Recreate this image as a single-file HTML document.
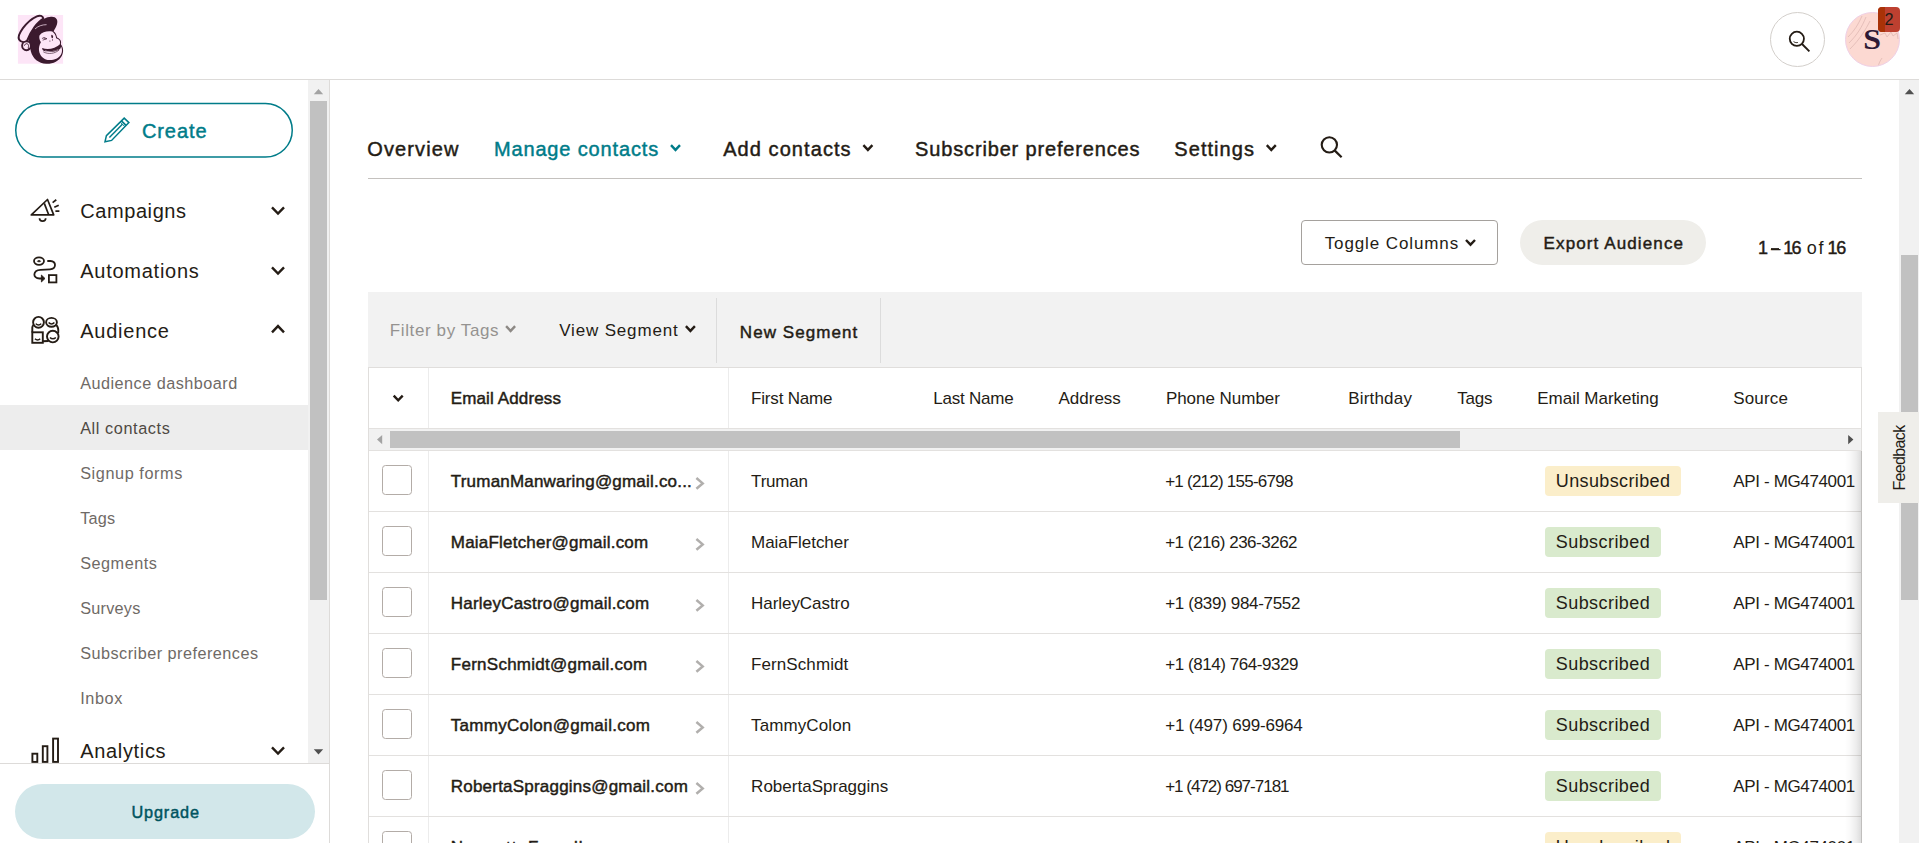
<!DOCTYPE html>
<html><head><meta charset="utf-8"><title>Audience | Mailchimp</title>
<style>
html,body{margin:0;padding:0;width:1919px;height:843px;overflow:hidden;background:#fff;font-family:"Liberation Sans",sans-serif;}
.a{position:absolute;}
.t{position:absolute;white-space:nowrap;line-height:1;font-family:"Liberation Sans",sans-serif;}
svg{position:absolute;overflow:visible;}
.cb{position:absolute;left:382px;width:28px;height:28px;border:1px solid #b3aca7;border-radius:3.5px;background:#fff;}
.bs{position:absolute;left:1545px;width:116px;height:30px;border-radius:4px;background:#d9eacd;}
.bu{position:absolute;left:1545px;width:136px;height:30px;border-radius:4px;background:#fbeeca;}
.rl{position:absolute;left:369px;width:1493px;height:1px;background:#e3e1df;}
</style></head><body>
<!-- header -->
<div class="a" style="left:0;top:79px;width:1919px;height:1px;background:#dddbd9"></div>
<!--LOGO_S--><svg style="left:14px;top:10px" width="56" height="60" viewBox="0 0 787 843">
<rect x="55" y="70" width="635" height="685" fill="#fde5f7"/>
<!-- head + crown -->
<path fill="#3b1a2e" d="M200,330 C270,215 330,160 420,128 C455,106 490,98 520,96 C588,90 626,135 603,205 C593,240 573,268 557,298 C586,322 599,352 605,385 C651,402 673,440 657,482 C693,522 703,585 673,642 C633,718 546,760 453,756 C346,750 263,684 237,584 C227,540 222,470 200,420 Z"/>
<!-- brim -->
<path transform="translate(5,10)" d="M66,404 C34,345 160,148 316,78 C360,60 400,74 408,110 C330,152 230,282 176,428 C134,448 86,440 66,404 Z" fill="#fde5f7" stroke="#3b1a2e" stroke-width="27" stroke-linejoin="round"/>
<!-- crown highlight -->
<path d="M300,262 C340,225 395,206 452,206" fill="none" stroke="#fde5f7" stroke-width="10" stroke-linecap="round"/>
<!-- face -->
<path d="M358,358 C394,306 470,290 538,302 C572,326 588,358 592,396 C638,408 658,440 642,484 C678,524 686,580 658,630 C624,688 548,712 472,702 C406,690 362,638 352,574 C346,530 356,490 378,452 C358,420 350,388 358,358 Z" fill="#fde5f7"/>
<!-- ear -->
<circle cx="176" cy="503" r="62" fill="#fde5f7" stroke="#3b1a2e" stroke-width="27"/>
<path d="M148,496 C158,464 200,464 204,500 C206,518 196,526 202,544" fill="none" stroke="#3b1a2e" stroke-width="13" stroke-linecap="round"/>
<!-- mouth -->
<path d="M396,534 C470,566 580,546 656,474 C668,498 664,524 650,544 C590,594 480,602 418,574 C402,564 394,550 396,534 Z" fill="#3b1a2e"/>
<path d="M436,568 C500,588 580,574 632,544 C596,576 500,592 444,578 Z" fill="#fde5f7"/>
<path d="M416,590 C480,626 572,616 630,566" fill="none" stroke="#3b1a2e" stroke-width="9" stroke-linecap="round"/>
<!-- eyes -->
<ellipse cx="536" cy="372" rx="12" ry="24" transform="rotate(-12 536 372)" fill="#3b1a2e"/>
<path d="M398,398 C420,388 440,390 458,402 M408,422 C428,416 446,410 458,402 M420,384 L446,412" fill="none" stroke="#3b1a2e" stroke-width="10" stroke-linecap="round"/>
<circle cx="505" cy="436" r="7.5" fill="#3b1a2e"/><circle cx="541" cy="420" r="7.5" fill="#3b1a2e"/>
</svg>
<!--LOGO_E-->
<div class="a" style="left:1770px;top:12px;width:53px;height:53px;border:1px solid #d3cfcb;border-radius:50%"></div>
<svg style="left:0;top:0" width="1919" height="80" viewBox="0 0 1919 80" fill="none" stroke="#241c15"><circle cx="1796.85" cy="38.8" r="7.1" stroke-width="1.8"/><path d="M1802 44 L1809.4 51.4" stroke-width="1.9"/><path d="M1793.6 41.6 C1795 42.6 1796.4 42.8 1797.8 42.5" stroke-width="1"/></svg>
<div class="a" style="left:1845px;top:12px;width:53px;height:53px;border:1px solid #efd0e6;border-radius:50%;background:#fcd9d2;overflow:hidden">
<svg style="left:0;top:0" width="54" height="54" viewBox="0 0 54 54" fill="none" stroke="#e0b9b4" stroke-width="0.8"><path d="M2 24 C8 18 12 12 16 3"/><path d="M3 30 C11 22 16 14 20 4"/><path d="M4 36 C14 26 20 16 24 8"/><path d="M32 54 C33 50 34 48 36 45"/><path d="M34 22 L39 20 L41 24 L45 19 L47 23 L51 20 L52 26"/></svg>
</div>
<div class="a" style="left:1863.6px;top:25px;font:bold 29px/1 'Liberation Serif',serif;color:#2e1a35;transform:scaleX(1.1)">S</div>
<div class="a" style="left:1878px;top:7px;width:22px;height:25px;border-radius:4px;background:#bd4030;overflow:hidden"><div class="a" style="left:0;top:0;width:6.5px;height:25px;background:#a93207"></div></div>
<div class="a" style="left:1884.6px;top:11px;font:16.25px/1 'Liberation Sans',sans-serif;color:#241c15">2</div>

<!-- sidebar -->
<div class="a" style="left:329px;top:80px;width:1px;height:763px;background:#dddbd9"></div>
<div class="a" style="left:308px;top:80px;width:21px;height:683px;background:#f1f1f1"></div>
<div class="a" style="left:310px;top:101px;width:17px;height:498.5px;background:#c1c1c1"></div>
<svg style="left:308px;top:80px" width="21" height="683" viewBox="0 0 21 683"><path d="M5.8 14.2 L15.2 14.2 L10.5 9 Z" fill="#a3a3a3"/><path d="M5.8 669.3 L15.2 669.3 L10.5 674.5 Z" fill="#505050"/></svg>
<div class="a" style="left:0;top:405px;width:308px;height:45px;background:#ededed"></div>
<svg style="left:0;top:0" width="330" height="200" viewBox="0 0 330 200"><rect x="15.75" y="103.55" width="276.5" height="53.5" rx="26.75" fill="#fff" stroke="#007c89" stroke-width="1.5"/></svg>
<!--SIDEICONS_S--><svg style="left:0;top:0" width="330" height="770" viewBox="0 0 330 770" fill="none" stroke="#241c15">
<!-- pencil -->
<g stroke="#007c89" stroke-width="1.5" stroke-linejoin="miter">
<path d="M124.2 118.1 L128.9 122.6 L111.6 140.4 L105 141.8 L106.4 135.6 Z"/>
<path d="M121.4 120.9 L126.1 125.4"/><path d="M120.2 122.1 L124.9 126.6" stroke-width="1"/>
<path d="M109.4 137.4 L122.4 124.2" stroke-width="1.4"/>
</g>
<!-- chevrons -->
<g stroke-width="2.4">
<path d="M272 207.3 L278 213.5 L284 207.3"/>
<path d="M272 267.3 L278 273.5 L284 267.3"/>
<path d="M272 332.3 L278 326.1 L284 332.3"/>
<path d="M272 747.3 L278 753.5 L284 747.3"/>
</g>
<!-- megaphone -->
<g stroke-width="1.7" stroke-linejoin="round">
<path d="M31.3 214.9 L47.5 199.5 L53.7 214.9 Z"/>
<path d="M44.3 203.4 L48.7 214.7"/>
<path d="M52.6 202.6 L56.3 199.8 M54.3 207.3 L58.7 205.3 M55.4 211.1 L59.4 211.1"/>
<path d="M39.5 218.3 C39.5 222 45.7 222 45.7 218.3"/>
</g>
<!-- automations -->
<g stroke-width="1.8">
<ellipse cx="39" cy="261.1" rx="5" ry="3.7"/>
<ellipse cx="39" cy="261.2" rx="1.6" ry="0.6" fill="#241c15" stroke-width="0.8"/>
<path d="M47.3 261 L50.5 261 C56.6 261 56.6 269 50 269.3 L40.5 269.8 C32.6 270.2 32.4 278.5 39.5 278.5 L42.5 278.5"/>
<path d="M41.4 275 L45 278.5 L41.4 282 Z" fill="#241c15" stroke-width="0.8"/>
<rect x="48.9" y="275.1" width="7.5" height="7.3"/>
</g>
<!-- audience -->
<g stroke-width="1.9">
<circle cx="38.5" cy="322.3" r="5.4"/>
<ellipse cx="51.5" cy="322.3" rx="5.4" ry="4.4"/>
<circle cx="52.8" cy="336.6" r="5.8"/>
<rect x="32.3" y="332.3" width="10.5" height="10.5"/>
<path d="M32.3 332.4 L32.3 327.5 C32.3 326.5 32.8 325.6 33.6 325"/>
<path d="M56.3 325 C58.2 327 58.6 330 58.2 333.2"/>
<path d="M42.7 341.3 L48.6 341"/>
<g stroke-width="1.5"><path d="M35.8 323.6 C37.2 325.4 39.8 325.4 41.2 323.6"/><path d="M48.6 322.6 C50.2 324.4 52.8 324.4 54.4 322.6"/><path d="M50 337.4 C51.6 339.2 54.2 339.2 55.8 337.4"/><path d="M35 338.8 C36.4 340.4 38.8 340.4 40.2 338.8"/></g>
</g>
<!-- analytics -->
<g stroke-width="1.9">
<rect x="32.4" y="753.7" width="4.9" height="8.2"/>
<rect x="42.8" y="746.2" width="4.6" height="15.7"/>
<rect x="53.1" y="738.6" width="4.9" height="23.3"/>
</g>
</svg>
<!--SIDEICONS_E-->
<div class="a" style="left:0;top:763px;width:329px;height:80px;background:#fff"></div>
<div class="a" style="left:0;top:763px;width:329px;height:1px;background:#dddbd9"></div>
<div class="a" style="left:15px;top:784px;width:300px;height:55px;border-radius:27.5px;background:#d2e7ea"></div>

<!-- main -->
<div class="a" style="left:368px;top:178px;width:1494px;height:1px;background:#c4c1be"></div>
<div class="a" style="left:1301px;top:220px;width:195px;height:43px;border:1px solid #a5a19d;border-radius:4px"></div>
<div class="a" style="left:1520px;top:220px;width:186px;height:45px;border-radius:22.5px;background:#efeeea"></div>
<div class="a" style="left:1770.8px;top:248.2px;width:7.8px;height:1.7px;background:#3a332d"></div>
<div class="a" style="left:368px;top:292px;width:1494px;height:76px;background:#f2f2f2"></div>
<div class="a" style="left:716px;top:298px;width:1px;height:65px;background:#dcdcdc"></div>
<div class="a" style="left:880px;top:298px;width:1px;height:65px;background:#dcdcdc"></div>
<!-- table -->
<div class="a" style="left:368px;top:367px;width:1492px;height:500px;border:1px solid #e0dedc;background:#fff"></div>
<div class="a" style="left:428px;top:368px;width:1px;height:475px;background:#ececec"></div>
<div class="a" style="left:728px;top:368px;width:1px;height:475px;background:#ececec"></div>
<div class="a" style="left:369px;top:428px;width:1492px;height:23px;background:#f1f1f1"></div>
<div class="rl" style="top:428px"></div><div class="rl" style="top:450px"></div>
<div class="a" style="left:390px;top:431px;width:1070px;height:17px;background:#c1c1c1"></div>
<svg style="left:369px;top:429px" width="1492" height="21" viewBox="0 0 1492 21"><path d="M13.2 6 L13.2 15.2 L8 10.6 Z" fill="#a3a3a3"/><path d="M1479.2 6 L1479.2 15.2 L1484.4 10.6 Z" fill="#505050"/></svg>
<div class="rl" style="top:511px"></div>
<div class="cb" style="top:465px"></div>
<div class="bu" style="top:466px"></div>
<svg style="left:694px;top:477px" width="12" height="14" viewBox="0 0 12 14"><path d="M2.4 1 L8.7 6.4 L2.4 11.8" fill="none" stroke="#b1afad" stroke-width="2.5"/></svg>
<div class="rl" style="top:572px"></div>
<div class="cb" style="top:526px"></div>
<div class="bs" style="top:527px"></div>
<svg style="left:694px;top:538px" width="12" height="14" viewBox="0 0 12 14"><path d="M2.4 1 L8.7 6.4 L2.4 11.8" fill="none" stroke="#b1afad" stroke-width="2.5"/></svg>
<div class="rl" style="top:633px"></div>
<div class="cb" style="top:587px"></div>
<div class="bs" style="top:588px"></div>
<svg style="left:694px;top:599px" width="12" height="14" viewBox="0 0 12 14"><path d="M2.4 1 L8.7 6.4 L2.4 11.8" fill="none" stroke="#b1afad" stroke-width="2.5"/></svg>
<div class="rl" style="top:694px"></div>
<div class="cb" style="top:648px"></div>
<div class="bs" style="top:649px"></div>
<svg style="left:694px;top:660px" width="12" height="14" viewBox="0 0 12 14"><path d="M2.4 1 L8.7 6.4 L2.4 11.8" fill="none" stroke="#b1afad" stroke-width="2.5"/></svg>
<div class="rl" style="top:755px"></div>
<div class="cb" style="top:709px"></div>
<div class="bs" style="top:710px"></div>
<svg style="left:694px;top:721px" width="12" height="14" viewBox="0 0 12 14"><path d="M2.4 1 L8.7 6.4 L2.4 11.8" fill="none" stroke="#b1afad" stroke-width="2.5"/></svg>
<div class="rl" style="top:816px"></div>
<div class="cb" style="top:770px"></div>
<div class="bs" style="top:771px"></div>
<svg style="left:694px;top:782px" width="12" height="14" viewBox="0 0 12 14"><path d="M2.4 1 L8.7 6.4 L2.4 11.8" fill="none" stroke="#b1afad" stroke-width="2.5"/></svg>
<div class="rl" style="top:877px"></div>
<div class="cb" style="top:831px"></div>
<div class="bu" style="top:832px"></div>
<svg style="left:694px;top:843px" width="12" height="14" viewBox="0 0 12 14"><path d="M2.4 1 L8.7 6.4 L2.4 11.8" fill="none" stroke="#b1afad" stroke-width="2.5"/></svg>
<!-- right fade -->
<div class="a" style="left:1845px;top:451px;width:17px;height:392px;background:linear-gradient(to right,rgba(0,0,0,0),rgba(0,0,0,0.02) 25%,rgba(0,0,0,0.07) 65%,rgba(0,0,0,0.15))"></div>
<!-- page scrollbar -->
<div class="a" style="left:1899px;top:80px;width:21px;height:763px;background:#f1f1f1"></div>
<div class="a" style="left:1901px;top:255px;width:17px;height:345px;background:#c1c1c1"></div>
<svg style="left:1899px;top:80px" width="21" height="30" viewBox="0 0 21 30"><path d="M5.8 14.2 L15.2 14.2 L10.5 9 Z" fill="#505050"/></svg>
<!-- feedback -->
<div class="a" style="left:1878px;top:412px;width:41px;height:91px;background:#efeeea"></div>
<div class="t" style="left:1900px;top:457.5px;font-size:16px;letter-spacing:-0.65px;color:#241c15;transform:translate(-50%,-50%) rotate(-90deg)">Feedback</div>
<!--ICONS_S--><svg style="left:0;top:0" width="1919" height="843" viewBox="0 0 1919 843" fill="none" stroke="#241c15" stroke-width="2.4">
<!-- tab chevrons -->
<path d="M671 145.2 L675.5 149.9 L680 145.2" stroke="#007c89"/>
<path d="M863.4 145.2 L867.9 149.9 L872.4 145.2"/>
<path d="M1266.8 145.2 L1271.3 149.9 L1275.8 145.2"/>
<!-- tab search -->
<circle cx="1329.35" cy="144.85" r="7.65" stroke-width="2.1"/><path d="M1334.6 150.4 L1341.6 157.2" stroke-width="2.3"/>
<!-- toggle columns chevron -->
<path d="M1466 240 L1470.5 244.7 L1475 240"/>
<!-- filter chevrons -->
<path d="M506.1 326.2 L510.6 330.9 L515.1 326.2" stroke="#8d8985"/>
<path d="M685.9 326.2 L690.4 330.9 L694.9 326.2"/>
<!-- header chevron -->
<path d="M393.7 395.6 L398.2 400.3 L402.7 395.6"/>
</svg>
<!--ICONS_E-->
<span class="t" style="left:141.9px;top:121px;font-size:20px;color:#007c89;-webkit-text-stroke:0.45px currentColor;letter-spacing:0.93px;">Create</span>
<span class="t" style="left:80.2px;top:201px;font-size:20px;color:#241c15;letter-spacing:0.59px;">Campaigns</span>
<span class="t" style="left:80.2px;top:261px;font-size:20px;color:#241c15;letter-spacing:0.75px;">Automations</span>
<span class="t" style="left:80.2px;top:321px;font-size:20px;color:#241c15;letter-spacing:0.76px;">Audience</span>
<span class="t" style="left:80.2px;top:375px;font-size:16.25px;color:#6f6a66;letter-spacing:0.47px;">Audience dashboard</span>
<span class="t" style="left:80.2px;top:420px;font-size:16.25px;color:#4f4943;letter-spacing:0.59px;">All contacts</span>
<span class="t" style="left:80.2px;top:465px;font-size:16.25px;color:#6f6a66;letter-spacing:0.58px;">Signup forms</span>
<span class="t" style="left:80.2px;top:510px;font-size:16.25px;color:#6f6a66;letter-spacing:0.19px;">Tags</span>
<span class="t" style="left:80.2px;top:555px;font-size:16.25px;color:#6f6a66;letter-spacing:0.50px;">Segments</span>
<span class="t" style="left:80.2px;top:600px;font-size:16.25px;color:#6f6a66;letter-spacing:0.23px;">Surveys</span>
<span class="t" style="left:80.2px;top:645px;font-size:16.25px;color:#6f6a66;letter-spacing:0.47px;">Subscriber preferences</span>
<span class="t" style="left:80.2px;top:690px;font-size:16.25px;color:#6f6a66;letter-spacing:0.58px;">Inbox</span>
<span class="t" style="left:80.2px;top:741px;font-size:20px;color:#241c15;letter-spacing:0.67px;">Analytics</span>
<span class="t" style="left:131.4px;top:804px;font-size:16.25px;color:#00545f;-webkit-text-stroke:0.45px currentColor;letter-spacing:0.88px;">Upgrade</span>
<span class="t" style="left:367.3px;top:139px;font-size:20px;color:#241c15;-webkit-text-stroke:0.45px currentColor;letter-spacing:1.12px;">Overview</span>
<span class="t" style="left:493.9px;top:139px;font-size:20px;color:#007c89;-webkit-text-stroke:0.45px currentColor;letter-spacing:0.86px;">Manage contacts</span>
<span class="t" style="left:723.2px;top:139px;font-size:20px;color:#241c15;-webkit-text-stroke:0.45px currentColor;letter-spacing:1.07px;">Add contacts</span>
<span class="t" style="left:915.1px;top:139px;font-size:20px;color:#241c15;-webkit-text-stroke:0.45px currentColor;letter-spacing:0.84px;">Subscriber preferences</span>
<span class="t" style="left:1174.3px;top:139px;font-size:20px;color:#241c15;-webkit-text-stroke:0.45px currentColor;letter-spacing:1.06px;">Settings</span>
<span class="t" style="left:1324.7px;top:235px;font-size:17px;color:#241c15;letter-spacing:0.89px;">Toggle Columns</span>
<span class="t" style="left:1543.6px;top:235px;font-size:17px;color:#241c15;-webkit-text-stroke:0.45px currentColor;letter-spacing:1.11px;">Export Audience</span>
<span class="t" style="left:1758.0px;top:239px;font-size:18px;color:#241c15;-webkit-text-stroke:0.45px currentColor;letter-spacing:-3.12px;">1</span>
<span class="t" style="left:1770.9px;top:240px;font-size:17px;color:#241c15;letter-spacing:-0.97px;">–</span>
<span class="t" style="left:1783.2px;top:239px;font-size:18px;color:#241c15;-webkit-text-stroke:0.45px currentColor;letter-spacing:-1.63px;">16</span>
<span class="t" style="left:1806.7px;top:239px;font-size:18px;color:#241c15;letter-spacing:1.88px;">of</span>
<span class="t" style="left:1827.6px;top:239px;font-size:18px;color:#241c15;-webkit-text-stroke:0.45px currentColor;letter-spacing:-1.33px;">16</span>
<span class="t" style="left:389.8px;top:322px;font-size:17px;color:#959290;letter-spacing:0.61px;">Filter by Tags</span>
<span class="t" style="left:559.2px;top:322px;font-size:17px;color:#241c15;letter-spacing:0.84px;">View Segment</span>
<span class="t" style="left:739.8px;top:324px;font-size:17px;color:#241c15;-webkit-text-stroke:0.45px currentColor;letter-spacing:1.06px;">New Segment</span>
<span class="t" style="left:450.8px;top:390px;font-size:17px;color:#241c15;-webkit-text-stroke:0.45px currentColor;letter-spacing:0.12px;">Email Address</span>
<span class="t" style="left:751.1px;top:390px;font-size:17px;color:#241c15;letter-spacing:-0.19px;">First Name</span>
<span class="t" style="left:933.2px;top:390px;font-size:17px;color:#241c15;letter-spacing:-0.21px;">Last Name</span>
<span class="t" style="left:1058.4px;top:390px;font-size:17px;color:#241c15;letter-spacing:0.02px;">Address</span>
<span class="t" style="left:1165.9px;top:390px;font-size:17px;color:#241c15;letter-spacing:-0.03px;">Phone Number</span>
<span class="t" style="left:1348.2px;top:390px;font-size:17px;color:#241c15;letter-spacing:0.19px;">Birthday</span>
<span class="t" style="left:1457.2px;top:390px;font-size:17px;color:#241c15;letter-spacing:-0.24px;">Tags</span>
<span class="t" style="left:1537.3px;top:390px;font-size:17px;color:#241c15;letter-spacing:-0.03px;">Email Marketing</span>
<span class="t" style="left:1733.3px;top:390px;font-size:17px;color:#241c15;letter-spacing:0.14px;">Source</span>
<span class="t" style="left:450.8px;top:473px;font-size:17px;color:#241c15;-webkit-text-stroke:0.45px currentColor;letter-spacing:0.20px;">TrumanManwaring@gmail.co...</span>
<span class="t" style="left:751.1px;top:473px;font-size:17px;color:#241c15;letter-spacing:-0.21px;">Truman</span>
<span class="t" style="left:1165.2px;top:473px;font-size:17px;color:#241c15;letter-spacing:-0.76px;">+1 (212) 155-6798</span>
<span class="t" style="left:1733.3px;top:473px;font-size:17px;color:#241c15;letter-spacing:-0.36px;">API - MG474001</span>
<span class="t" style="left:1555.8px;top:472px;font-size:18px;color:#241c15;letter-spacing:0.37px;">Unsubscribed</span>
<span class="t" style="left:450.8px;top:534px;font-size:17px;color:#241c15;-webkit-text-stroke:0.45px currentColor;letter-spacing:0.21px;">MaiaFletcher@gmail.com</span>
<span class="t" style="left:751.1px;top:534px;font-size:17px;color:#241c15;letter-spacing:-0.05px;">MaiaFletcher</span>
<span class="t" style="left:1165.2px;top:534px;font-size:17px;color:#241c15;letter-spacing:-0.50px;">+1 (216) 236-3262</span>
<span class="t" style="left:1733.3px;top:534px;font-size:17px;color:#241c15;letter-spacing:-0.36px;">API - MG474001</span>
<span class="t" style="left:1555.8px;top:533px;font-size:18px;color:#241c15;letter-spacing:0.43px;">Subscribed</span>
<span class="t" style="left:450.8px;top:595px;font-size:17px;color:#241c15;-webkit-text-stroke:0.45px currentColor;letter-spacing:0.21px;">HarleyCastro@gmail.com</span>
<span class="t" style="left:751.1px;top:595px;font-size:17px;color:#241c15;letter-spacing:-0.06px;">HarleyCastro</span>
<span class="t" style="left:1165.2px;top:595px;font-size:17px;color:#241c15;letter-spacing:-0.32px;">+1 (839) 984-7552</span>
<span class="t" style="left:1733.3px;top:595px;font-size:17px;color:#241c15;letter-spacing:-0.36px;">API - MG474001</span>
<span class="t" style="left:1555.8px;top:594px;font-size:18px;color:#241c15;letter-spacing:0.43px;">Subscribed</span>
<span class="t" style="left:450.8px;top:656px;font-size:17px;color:#241c15;-webkit-text-stroke:0.45px currentColor;letter-spacing:0.26px;">FernSchmidt@gmail.com</span>
<span class="t" style="left:751.1px;top:656px;font-size:17px;color:#241c15;letter-spacing:0.08px;">FernSchmidt</span>
<span class="t" style="left:1165.2px;top:656px;font-size:17px;color:#241c15;letter-spacing:-0.45px;">+1 (814) 764-9329</span>
<span class="t" style="left:1733.3px;top:656px;font-size:17px;color:#241c15;letter-spacing:-0.36px;">API - MG474001</span>
<span class="t" style="left:1555.8px;top:655px;font-size:18px;color:#241c15;letter-spacing:0.43px;">Subscribed</span>
<span class="t" style="left:450.8px;top:717px;font-size:17px;color:#241c15;-webkit-text-stroke:0.45px currentColor;letter-spacing:0.27px;">TammyColon@gmail.com</span>
<span class="t" style="left:751.1px;top:717px;font-size:17px;color:#241c15;letter-spacing:0.10px;">TammyColon</span>
<span class="t" style="left:1165.2px;top:717px;font-size:17px;color:#241c15;letter-spacing:-0.17px;">+1 (497) 699-6964</span>
<span class="t" style="left:1733.3px;top:717px;font-size:17px;color:#241c15;letter-spacing:-0.36px;">API - MG474001</span>
<span class="t" style="left:1555.8px;top:716px;font-size:18px;color:#241c15;letter-spacing:0.43px;">Subscribed</span>
<span class="t" style="left:450.8px;top:778px;font-size:17px;color:#241c15;-webkit-text-stroke:0.45px currentColor;letter-spacing:0.21px;">RobertaSpraggins@gmail.com</span>
<span class="t" style="left:751.1px;top:778px;font-size:17px;color:#241c15;letter-spacing:0.01px;">RobertaSpraggins</span>
<span class="t" style="left:1165.2px;top:778px;font-size:17px;color:#241c15;letter-spacing:-1.00px;">+1 (472) 697-7181</span>
<span class="t" style="left:1733.3px;top:778px;font-size:17px;color:#241c15;letter-spacing:-0.36px;">API - MG474001</span>
<span class="t" style="left:1555.8px;top:777px;font-size:18px;color:#241c15;letter-spacing:0.43px;">Subscribed</span>
<span class="t" style="left:450.8px;top:839px;font-size:17px;color:#241c15;-webkit-text-stroke:0.45px currentColor;letter-spacing:1.04px;">NannetteFarrell</span>
<span class="t" style="left:1733.3px;top:839px;font-size:17px;color:#241c15;letter-spacing:-0.36px;">API - MG474001</span>
<span class="t" style="left:1555.8px;top:838px;font-size:18px;color:#241c15;letter-spacing:0.37px;">Unsubscribed</span>
</body></html>
